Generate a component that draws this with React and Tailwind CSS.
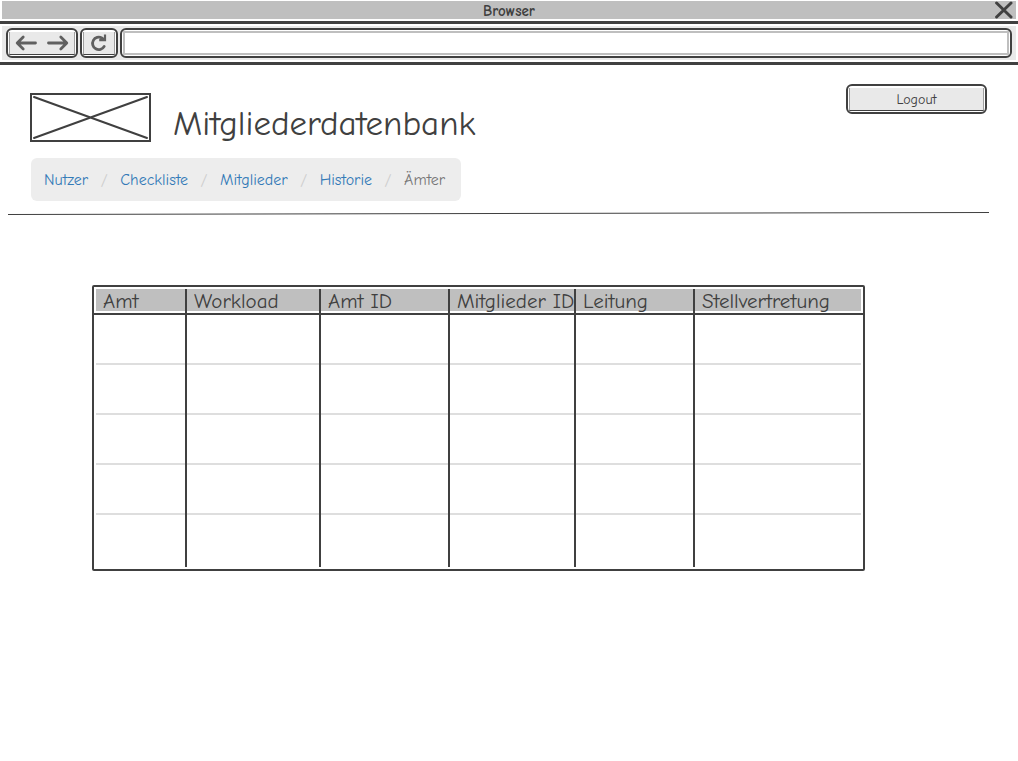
const INK = '#404040';

const columns = [
  { label: 'Amt', width: 'w-[91px]' },
  { label: 'Workload', width: 'w-[134px]' },
  { label: 'Amt ID', width: 'w-[129px]' },
  { label: 'Mitglieder ID', width: 'w-[126px]' },
  { label: 'Leitung', width: 'w-[119px]' },
  { label: 'Stellvertretung', width: 'w-[170px]' },
];

const links = ['Nutzer', 'Checkliste', 'Mitglieder', 'Historie'];
const rows = [0, 1, 2, 3, 4];

function edge(index) {
  if (index === 0) return 'pl-[2px]';
  if (index === columns.length - 1) return 'border-l-2 border-[#404040] pr-[2px]';
  return 'border-l-2 border-[#404040]';
}

function Arrow({ flip }) {
  return (
    <svg width="22" height="16" viewBox="0 0 22 16" fill="none" stroke="#606060" strokeWidth="2.8" strokeLinecap="round" strokeLinejoin="round" className={flip ? 'rotate-180' : ''}>
      <path d="M20.5 8H2.4M8.2 2L2.2 8L8.2 14" />
    </svg>
  );
}

function BrowserChrome() {
  return (
    <header>
      <div className="flex h-[21px] px-[2px] pt-px pb-[2px]">
        <div className="grid flex-1 grid-cols-[1fr_auto_1fr] items-center bg-[#bfbfbf]">
          <span className="col-start-2 pt-[2px] text-[15px] leading-4 font-bold">Browser</span>
          <button type="button" aria-label="Schließen" className="mr-[3px] justify-self-end">
            <svg width="18" height="18" viewBox="0 0 18 18" fill="none" stroke={INK} strokeWidth="3" strokeLinecap="round">
              <path d="M1.6 2L16 16M16 2L1.6 16" />
            </svg>
          </button>
        </div>
      </div>
      <div className="border-y-[3px] border-[#404040] px-[2px] py-[2px]">
        <div className="flex h-[34px] gap-[2px] bg-[#e9e9e9] px-1 py-[2px]">
          <div className="flex w-[72px] rounded-md border-2 border-[#404040] bg-white px-px pt-[2px] pb-px">
            <div className="flex flex-1 items-center justify-between border-x border-b border-x-[#a0a0a0] border-b-[#404040] bg-[#e9e9e9] px-[5px]">
              <button type="button" aria-label="Zurück"><Arrow /></button>
              <button type="button" aria-label="Vorwärts"><Arrow flip /></button>
            </div>
          </div>
          <button type="button" aria-label="Neu laden" className="flex w-[38px] rounded-md border-2 border-[#404040] bg-white px-px pt-[2px] pb-px">
            <span className="flex flex-1 items-center justify-center self-stretch border-x border-b border-x-[#a0a0a0] border-b-[#404040] bg-[#e9e9e9]">
              <svg width="18" height="20" viewBox="0 0 18 20" fill="none" stroke="#606060" strokeWidth="2.8" strokeLinecap="round">
                <path d="M14.2 13.4A6.2 6.2 0 1 1 11.8 5L14 6.6" />
                <path d="M15 1.4V7.2H9.2" strokeWidth="2.2" strokeLinecap="butt" />
              </svg>
            </span>
          </button>
          <div className="flex flex-1 rounded-md border-2 border-[#404040] bg-white p-px">
            <input type="text" aria-label="Adresse" className="min-w-0 flex-1 border-2 border-[#bfbfbf] px-1 text-sm outline-none" />
          </div>
        </div>
      </div>
    </header>
  );
}

export default function App() {
  return (
    <div className="font-['Comic_Sans_MS','Comic_Neue','Open_Sans',sans-serif] text-[#404040]">
      <BrowserChrome />
      <main>
        <div className="flex items-start pt-[19px] pr-[31px] pl-[30px]">
          <svg className="mt-[9px]" width="121" height="49" viewBox="0 0 121 49" fill="none" stroke={INK} strokeWidth="2" strokeLinecap="round">
            <path d="M1 1H120V48H1Z" />
            <path d="M4 4L117 45M4 45L117 4" />
          </svg>
          <h1 className="mt-[17px] ml-[22px] h-[41px] text-[35px] leading-[46px]">Mitgliederdatenbank</h1>
          <button type="button" className="ml-auto flex h-[30px] w-[141px] rounded-md border-2 border-[#404040] bg-white px-px pt-[2px] pb-px">
            <span className="flex flex-1 items-center justify-center self-stretch border-x border-b border-x-[#a0a0a0] border-b-[#404040] bg-[#e9e9e9] pt-[2px] text-[14px] leading-4">Logout</span>
          </button>
        </div>
        <nav aria-label="Navigation" className="mt-4 ml-[31px] w-fit rounded-md bg-[#ededed] pt-3 pr-4 pb-[11px] pl-[13px]">
          <ol className="flex text-[16px] leading-5">
            {links.map((label) => (
              <li key={label} className="flex">
                <a href="#" className="text-[#337ab7]">{label}</a>
                <span aria-hidden="true" className="w-8 text-center text-[#cccccc]">/</span>
              </li>
            ))}
            <li aria-current="page" className="text-[#777777]">Ämter</li>
          </ol>
        </nav>
        <svg className="mt-[10px] ml-2 h-1 w-[calc(100%-37px)]" viewBox="0 0 981 4" preserveAspectRatio="none">
          <path d="M0 3.5L981 1.5" stroke={INK} strokeWidth="1" />
        </svg>
        <div className="mt-[70px] mr-[153px] ml-[92px] rounded-xs border-2 border-[#404040] py-[2px]">
          <table className="w-full table-fixed border-separate border-spacing-0">
            <thead>
              <tr>
                {columns.map(({ label, width }, index) => (
                  <th key={label} scope="col" className={`${width} p-0 text-left font-normal ${edge(index)}`}>
                    <div className="h-[22px] bg-[#bfbfbf] pl-[7px] text-[21px] leading-6 whitespace-nowrap">{label}</div>
                    <div className={`mt-[2px] border-b-2 border-[#404040] ${index === 0 ? '-ml-[2px]' : ''} ${index === columns.length - 1 ? '-mr-[2px]' : ''}`} />
                  </th>
                ))}
              </tr>
            </thead>
            <tbody>
              {rows.map((row) => (
                <tr key={row}>
                  {columns.map(({ label }, index) => (
                    <td key={label} className={`p-0 ${edge(index)}`}>
                      <div className={row === 4 ? 'h-[52px]' : 'h-[50px] border-b-2 border-[#dedede]'} />
                    </td>
                  ))}
                </tr>
              ))}
            </tbody>
          </table>
        </div>
      </main>
    </div>
  );
}
